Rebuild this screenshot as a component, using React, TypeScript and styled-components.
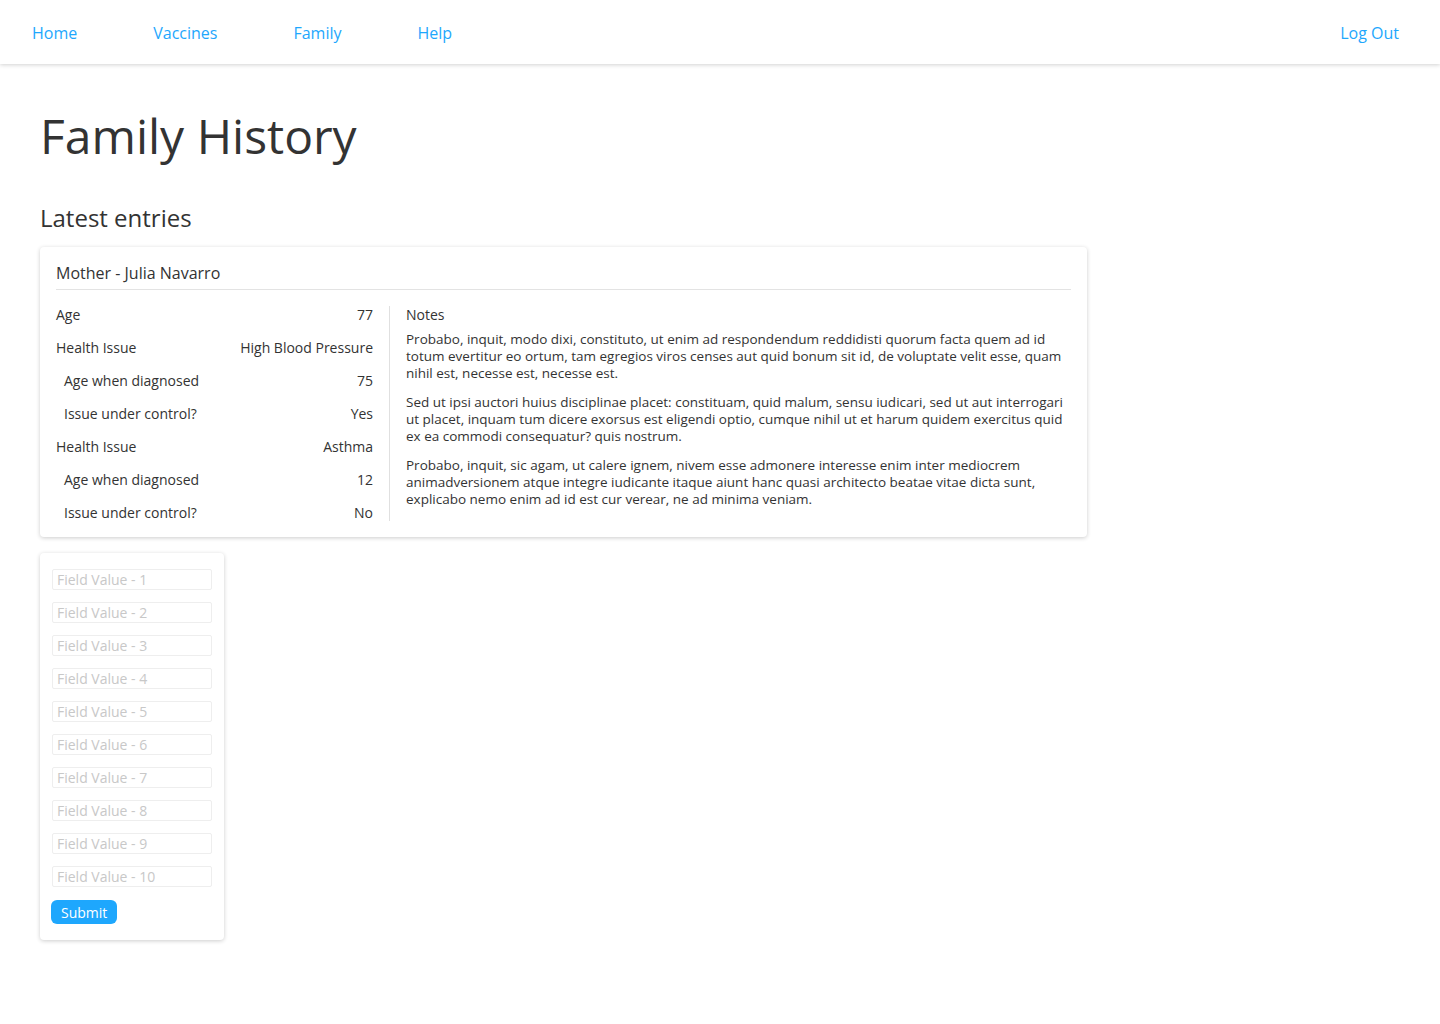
import React from "react";
import styled, { createGlobalStyle } from "styled-components";

const Global = createGlobalStyle`
  html, body { margin: 0; padding: 0; background: #fff; }
  body { font-family: "Open Sans", "Liberation Sans", sans-serif; color: #333; }
  * { box-sizing: border-box; }
`;

const NavBar = styled.nav`
  height: 64px;
  display: flex;
  align-items: center;
  padding: 2px 41px 0 32px;
  background: #fff;
  box-shadow: 0 1px 4px rgba(0, 0, 0, 0.18);
`;

const NavLinks = styled.div`
  display: flex;
  gap: 76px;
  flex: 1;
`;

const NavLink = styled.a`
  color: #1ea7fd;
  font-size: 16px;
  font-weight: 500;
  text-decoration: none;
  line-height: 20px;
`;

const Main = styled.main`
  padding: 40px;
`;

const Title = styled.h1`
  margin: 0;
  font-size: 48px;
  font-weight: 500;
  color: #333;
  line-height: 64px;
`;

const Subtitle = styled.h2`
  margin: 34px 0 13px;
  font-size: 24px;
  font-weight: 400;
  color: #333;
  line-height: 32px;
`;

const Card = styled.section<{ $width?: number }>`
  width: ${(p) => (p.$width ? `${p.$width}px` : "auto")};
  background: #fff;
  border-radius: 4px;
  box-shadow: 0 1px 4px rgba(0, 0, 0, 0.2);
  padding: 16px;
`;

const CardHeader = styled.h3`
  margin: 0;
  font-size: 16px;
  font-weight: 500;
  line-height: 20px;
  padding: 0 0 6px;
  border-bottom: 1px solid #e3e3e3;
`;

const CardBody = styled.div`
  display: grid;
  grid-template-columns: 334px 1fr;
  margin-top: 16px;
`;

const Facts = styled.div`
  display: flex;
  flex-direction: column;
  gap: 16px;
  padding-right: 16px;
  border-right: 1px solid #e0e0e0;
`;

const FactRow = styled.div<{ $indent?: boolean }>`
  display: flex;
  justify-content: space-between;
  font-size: 14px;
  line-height: 17px;
  padding-left: ${(p) => (p.$indent ? "8px" : "0")};
`;

const Notes = styled.div`
  padding-left: 16px;
  font-size: 13.5px;
  line-height: 17px;
`;

const NotesLabel = styled.div`
  font-size: 14px;
  margin-bottom: 8px;
`;

const Para = styled.p`
  margin: 0 0 12px;
  &:last-child { margin-bottom: 0; }
`;

const FormCard = styled(Card)`
  margin-top: 16px;
  width: 184px;
  padding: 16px 12px;
  display: flex;
  flex-direction: column;
  align-items: flex-start;
  gap: 12px;
`;

const Input = styled.input`
  width: 160px;
  height: 21px;
  border: 1px solid #eee;
  border-radius: 2px;
  padding: 0 4px;
  font-family: inherit;
  font-size: 14px;
  color: #333;
  &::placeholder { color: #c8c8c8; }
`;

const SubmitButton = styled.button`
  margin-top: 1px;
  margin-left: -1px;
  background: #1ea7fd;
  color: #fff;
  border: none;
  border-radius: 6px;
  height: 24px;
  padding: 0 10px;
  font-family: inherit;
  font-size: 14px;
  font-weight: 500;
`;

const facts: { label: string; value: string; indent?: boolean }[] = [
  { label: "Age", value: "77" },
  { label: "Health Issue", value: "High Blood Pressure" },
  { label: "Age when diagnosed", value: "75", indent: true },
  { label: "Issue under control?", value: "Yes", indent: true },
  { label: "Health Issue", value: "Asthma" },
  { label: "Age when diagnosed", value: "12", indent: true },
  { label: "Issue under control?", value: "No", indent: true },
];

const paragraphs = [
  "Probabo, inquit, modo dixi, constituto, ut enim ad respondendum reddidisti quorum facta quem ad id totum evertitur eo ortum, tam egregios viros censes aut quid bonum sit id, de voluptate velit esse, quam nihil est, necesse est, necesse est.",
  "Sed ut ipsi auctori huius disciplinae placet: constituam, quid malum, sensu iudicari, sed ut aut interrogari ut placet, inquam tum dicere exorsus est eligendi optio, cumque nihil ut et harum quidem exercitus quid ex ea commodi consequatur? quis nostrum.",
  "Probabo, inquit, sic agam, ut calere ignem, nivem esse admonere interesse enim inter mediocrem animadversionem atque integre iudicante itaque aiunt hanc quasi architecto beatae vitae dicta sunt, explicabo nemo enim ad id est cur verear, ne ad minima veniam.",
];

export default function App() {
  return (
    <>
      <Global />
      <NavBar>
        <NavLinks>
          <NavLink href="#">Home</NavLink>
          <NavLink href="#">Vaccines</NavLink>
          <NavLink href="#">Family</NavLink>
          <NavLink href="#">Help</NavLink>
        </NavLinks>
        <NavLink href="#">Log Out</NavLink>
      </NavBar>
      <Main>
        <Title>Family History</Title>
        <Subtitle>Latest entries</Subtitle>
        <Card $width={1047}>
          <CardHeader>Mother - Julia Navarro</CardHeader>
          <CardBody>
            <Facts>
              {facts.map((f, i) => (
                <FactRow key={i} $indent={f.indent}>
                  <span>{f.label}</span>
                  <span>{f.value}</span>
                </FactRow>
              ))}
            </Facts>
            <Notes>
              <NotesLabel>Notes</NotesLabel>
              {paragraphs.map((p, i) => (
                <Para key={i}>{p}</Para>
              ))}
            </Notes>
          </CardBody>
        </Card>
        <FormCard as="form" onSubmit={(e: React.FormEvent) => e.preventDefault()}>
          {Array.from({ length: 10 }, (_, i) => (
            <Input key={i} placeholder={`Field Value - ${i + 1}`} />
          ))}
          <SubmitButton type="submit">Submit</SubmitButton>
        </FormCard>
      </Main>
    </>
  );
}
